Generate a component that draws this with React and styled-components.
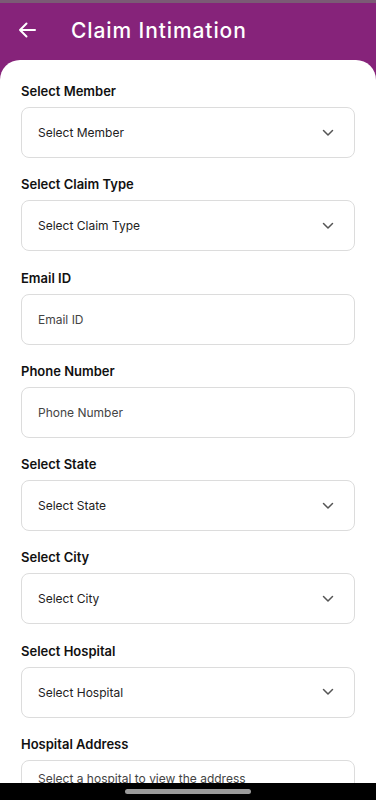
import styled, { createGlobalStyle } from 'styled-components';

const GlobalStyle = createGlobalStyle`
  * { box-sizing: border-box; }
  html, body {
    margin: 0;
    padding: 0;
    height: 800px;
    overflow: hidden;
    background: #86237a;
    font-family: Inter, "Noto Sans", sans-serif;
  }
`;

const Page = styled.div`
  position: relative;
  height: 800px;
  display: flex;
  flex-direction: column;
  overflow: hidden;
  background: #86237a;
  border-top: 3px solid #7b5a75;
`;

const Header = styled.div`
  flex-shrink: 0;
  height: 57px;
  display: flex;
  align-items: center;
  padding: 0 0 3px 17px;
  gap: 34px;
  color: #fff;
`;

const Title = styled.h1`
  margin: 0;
  font-size: 21px;
  font-weight: 500;
  letter-spacing: 0.9px;
`;

const Card = styled.div`
  flex: 1;
  min-height: 0;
  overflow: hidden;
  background: #fff;
  border-radius: 20px 20px 0 0;
  padding: 23px 21px 0;
  display: flex;
  flex-direction: column;
`;

const Field = styled.div`
  flex-shrink: 0;
  display: flex;
  flex-direction: column;
  gap: 8px;
  margin-bottom: 18.25px;
`;

const Label = styled.label`
  font-size: 13px;
  line-height: 16px;
  font-weight: 600;
  color: #111;
`;

const Box = styled.div`
  height: 51px;
  border: 1px solid #dcdcdc;
  border-radius: 8px;
  display: flex;
  align-items: ${(p) => (p.$multiline ? 'flex-start' : 'center')};
  justify-content: space-between;
  padding: ${(p) => (p.$multiline ? '10px 20px 0 16px' : '0 20px 0 16px')};
  font-size: 12px;
  color: ${(p) => (p.$input ? '#444' : '#222')};
`;

const NavBar = styled.div`
  position: absolute;
  left: 0;
  right: 0;
  bottom: 0;
  height: 17px;
  background: #000;
  display: flex;
  justify-content: center;
  align-items: center;
`;

const Pill = styled.div`
  width: 126px;
  height: 5px;
  border-radius: 3px;
  background: #9a9a9a;
`;

const Chevron = () => (
  <svg width="12" height="8" viewBox="0 0 12 8" fill="none">
    <path d="M1.5 1.5 6 6l4.5-4.5" stroke="#555" strokeWidth="1.5" strokeLinecap="round" strokeLinejoin="round" />
  </svg>
);

const BackArrow = () => (
  <svg width="20" height="20" viewBox="0 0 20 20" fill="none">
    <path d="M18 10H3M9.5 3.5 3 10l6.5 6.5" stroke="#fff" strokeWidth="2" strokeLinecap="round" strokeLinejoin="round" />
  </svg>
);

const fields = [
  { label: 'Select Member', text: 'Select Member', select: true },
  { label: 'Select Claim Type', text: 'Select Claim Type', select: true },
  { label: 'Email ID', text: 'Email ID' },
  { label: 'Phone Number', text: 'Phone Number' },
  { label: 'Select State', text: 'Select State', select: true },
  { label: 'Select City', text: 'Select City', select: true },
  { label: 'Select Hospital', text: 'Select Hospital', select: true },
  { label: 'Hospital Address', text: 'Select a hospital to view the address', multiline: true },
];

export default function App() {
  return (
    <>
      <GlobalStyle />
      <Page>
        <Header>
          <BackArrow />
          <Title>Claim Intimation</Title>
        </Header>
        <Card>
          {fields.map((f) => (
            <Field key={f.label}>
              <Label>{f.label}</Label>
              <Box $input={!f.select} $multiline={f.multiline}>
                <span>{f.text}</span>
                {f.select && <Chevron />}
              </Box>
            </Field>
          ))}
        </Card>
        <NavBar>
          <Pill />
        </NavBar>
      </Page>
    </>
  );
}
